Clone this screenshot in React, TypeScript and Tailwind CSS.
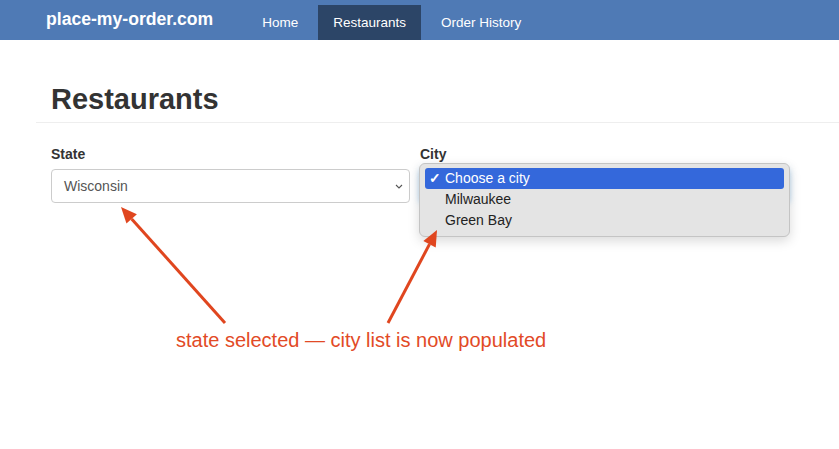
import React from "react";

const navItems = [
  { label: "Home", active: false },
  { label: "Restaurants", active: true },
  { label: "Order History", active: false },
];

const cities = ["Choose a city", "Milwaukee", "Green Bay"];

const Chevron = () => (
  <svg width="8" height="5" viewBox="0 0 8 5" className="text-[#555]">
    <path d="M1 1l3 3 3-3" fill="none" stroke="currentColor" strokeWidth="1.1" />
  </svg>
);

const Arrow = ({ x1, y1, x2, y2 }: { x1: number; y1: number; x2: number; y2: number }) => {
  const a = Math.atan2(y2 - y1, x2 - x1);
  const len = 16;
  const w = 7;
  const bx = x2 - Math.cos(a) * len;
  const by = y2 - Math.sin(a) * len;
  const px = -Math.sin(a) * w;
  const py = Math.cos(a) * w;
  return (
    <g>
      <line x1={x1} y1={y1} x2={bx} y2={by} stroke="#e0461f" strokeWidth="3" />
      <polygon points={`${x2},${y2} ${bx + px},${by + py} ${bx - px},${by - py}`} fill="#e0461f" />
    </g>
  );
};

export default function App() {
  return (
    <div className="relative w-[839px] h-[449px] overflow-hidden bg-white font-['Liberation_Sans',Arial,sans-serif]">
      <nav className="h-10 bg-[#4f7ab5] flex pl-[46px]">
        <a className="self-center text-white font-bold text-[17.6px] leading-none">place-my-order.com</a>
        <ul className="flex gap-[5px] ml-[34px] mt-[5px] h-[35px]">
          {navItems.map((item) => (
            <li
              key={item.label}
              className={`flex items-center px-[15px] pt-[1px] text-[13.5px] text-white ${item.active ? "bg-[#2c4567]" : ""}`}
            >
              {item.label}
            </li>
          ))}
        </ul>
      </nav>

      <main className="pl-[36px]">
        <div className="pl-[15px] pt-[43px] pb-[7px] border-b border-[#eee]">
          <h1 className="text-[29px] leading-[32px] font-bold text-[#333]">Restaurants</h1>
        </div>

        <div className="grid grid-cols-[359px_369px] gap-[10px] pl-[15px] pt-[21px]">
          <div>
            <label className="block text-[14px] leading-5 font-bold text-[#333] mb-[5px]">State</label>
            <div className="flex items-center justify-between h-[34px] border border-[#ccc] rounded-[4px] pl-[12px] pr-[6px] text-[14px] text-[#555]">
              <span>Wisconsin</span>
              <Chevron />
            </div>
          </div>
          <div>
            <label className="block text-[14px] leading-5 font-bold text-[#333] mb-[5px]">City</label>
            <div className="h-[34px] border border-[#ccc] rounded-[4px] shadow-[0_0_6px_rgba(102,175,233,0.6)]" />
          </div>
        </div>
      </main>

      <div className="absolute left-[419px] top-[163px] w-[371px] h-[74px] rounded-[6px] border border-[#c4c4c4] bg-[#e4e4e4] shadow-[0_4px_12px_rgba(0,0,0,0.15)] px-[5px] pt-[4px] text-[14px] text-[#222]">
        {cities.map((c, i) => (
          <div
            key={c}
            className={`h-[21px] flex items-center rounded-[3px] ${i === 0 ? "bg-[#3468db] text-white" : ""}`}
          >
            <span className="w-[20px] pl-[4px] font-bold">{i === 0 ? "✓" : ""}</span>
            <span>{c}</span>
          </div>
        ))}
      </div>

      <svg className="absolute inset-0 pointer-events-none" width="839" height="449">
        <Arrow x1={225} y1={323} x2={121} y2={207} />
        <Arrow x1={388} y1={323} x2={437} y2={230} />
      </svg>

      <p className="absolute left-[176px] top-[329px] text-[20px] leading-[22px] text-[#e24a26]">
        state selected — city list is now populated
      </p>
    </div>
  );
}
